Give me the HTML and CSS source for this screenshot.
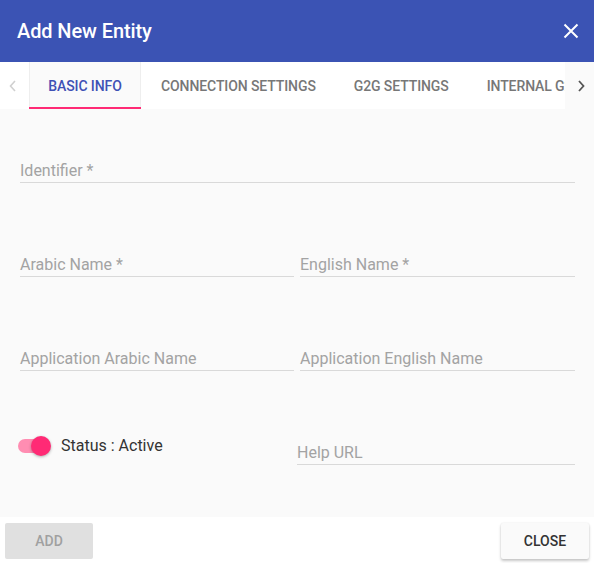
FILE: index.html
```html
<!DOCTYPE html>
<html>
<head>
<meta charset="utf-8">
<link rel="stylesheet" href="styles.css">
</head>
<body>
<div class="dialog">
  <header class="dlg-header">
    <h1 class="dlg-title">Add New Entity</h1>
    <button class="icon-btn" aria-label="close">
      <svg width="16" height="16" viewBox="0 0 16 16"><path d="M1.5 1.5 L14.5 14.5 M14.5 1.5 L1.5 14.5" stroke="#fff" stroke-width="2" fill="none"/></svg>
    </button>
  </header>
  <nav class="tabs">
    <div class="tab-arrow left">
      <svg width="10" height="14" viewBox="0 0 10 14"><path d="M7 2 L2.5 7 L7 12" stroke="#d0d0d0" stroke-width="1.6" fill="none"/></svg>
    </div>
    <div class="tab-list">
      <div class="tab active">BASIC INFO</div>
      <div class="tab">CONNECTION SETTINGS</div>
      <div class="tab">G2G SETTINGS</div>
      <div class="tab">INTERNAL G2G SETTINGS</div>
    </div>
    <div class="tab-arrow right">
      <svg width="10" height="14" viewBox="0 0 10 14"><path d="M3 2 L7.5 7 L3 12" stroke="#555" stroke-width="1.8" fill="none"/></svg>
    </div>
  </nav>
  <main class="dlg-body">
    <div class="field full"><span class="label">Identifier *</span></div>
    <div class="field"><span class="label">Arabic Name *</span></div>
    <div class="field"><span class="label">English Name *</span></div>
    <div class="field"><span class="label">Application Arabic Name</span></div>
    <div class="field"><span class="label">Application English Name</span></div>
    <div class="toggle-row">
      <span class="toggle"><span class="track"></span><span class="knob"></span></span>
      <span class="toggle-text">Status : Active</span>
    </div>
    <div class="field help"><span class="label">Help URL</span></div>
  </main>
  <footer class="dlg-footer">
    <button class="btn btn-disabled">ADD</button>
    <button class="btn btn-raised">CLOSE</button>
  </footer>
</div>
</body>
</html>
```

FILE: styles.css
```css
* { box-sizing: border-box; }
html, body { margin: 0; padding: 0; }
body {
  font-family: Roboto, "Noto Sans", sans-serif;
  background: #fafafa;
  width: 594px;
  height: 563px;
  overflow: hidden;
}
.dialog {
  display: flex;
  flex-direction: column;
  height: 563px;
}
.dlg-header {
  height: 62px;
  background: #3b53b4;
  display: flex;
  align-items: center;
  justify-content: space-between;
  padding: 0 15px 0 17px;
}
.dlg-title {
  margin: 0;
  color: #fff;
  font-size: 20px;
  font-weight: 500;
  letter-spacing: -0.1px;
}
.icon-btn {
  background: none;
  border: 0;
  padding: 0;
  width: 16px;
  height: 16px;
  display: flex;
}
.tabs {
  height: 48px;
  display: flex;
  background: #fafafa;
}
.tab-arrow {
  width: 29px;
  height: 47px;
  display: flex;
  align-items: center;
  justify-content: center;
  flex: none;
}
.tab-arrow.left { background: #fff; justify-content: flex-start; padding-left: 8px; }
.tab-arrow.right { background: #fafafa; padding-left: 2px; }
.tab-list {
  flex: 1;
  display: flex;
  overflow: hidden;
  background: #fff;
  height: 47px;
}
.tab {
  flex: none;
  display: flex;
  align-items: center;
  padding: 0 18px 0 20px;
  font-size: 14px;
  font-weight: 500;
  color: #777;
  white-space: nowrap;
  letter-spacing: -0.1px;
}
.tab.active {
  position: relative;
  width: 112px;
  padding: 0;
  justify-content: center;
  color: #3f51b5;
  background: #fafafa;
  border-left: 1px solid #eee;
  border-right: 1px solid #eee;
}
.tab.active::after {
  content: "";
  position: absolute;
  left: -1px;
  right: -1px;
  bottom: 0;
  height: 2px;
  background: #ff2a75;
}
.dlg-body {
  flex: 1;
  display: grid;
  grid-template-columns: 274px 275px;
  column-gap: 6px;
  row-gap: 63px;
  align-content: start;
  padding: 42px 19px 0 20px;
  background: #fafafa;
}
.field {
  height: 31px;
  border-bottom: 1px solid #d9d9d9;
  display: flex;
  align-items: flex-start;
  padding-top: 9px;
}
.field.full { grid-column: 1 / 3; }
.field.help { margin-left: -3px; }
.label {
  font-size: 16px;
  color: #a3a3a3;
  line-height: 20px;
}
.toggle-row {
  display: flex;
  align-items: flex-start;
  padding-top: 2px;
}
.toggle {
  position: relative;
  width: 34px;
  height: 20px;
  margin-left: -2px;
  flex: none;
}
.track {
  position: absolute;
  left: 0;
  top: 3px;
  width: 30px;
  height: 14px;
  border-radius: 7px;
  background: #ff8db2;
}
.knob {
  position: absolute;
  left: 13px;
  top: 0;
  width: 20px;
  height: 20px;
  border-radius: 50%;
  background: #ff2a75;
  box-shadow: 0 1px 3px rgba(0,0,0,0.3);
}
.toggle-text {
  margin-left: 9px;
  font-size: 16px;
  color: #333;
  line-height: 20px;
}
.dlg-footer {
  height: 46px;
  background: #fff;
  display: flex;
  justify-content: space-between;
  align-items: flex-start;
  padding: 6px 5px 0 5px;
}
.btn {
  width: 88px;
  height: 36px;
  border: 0;
  border-radius: 2px;
  font-family: Roboto, sans-serif;
  font-size: 14px;
  font-weight: 500;
}
.btn-disabled {
  background: #e0e0e0;
  color: #a0a0a0;
}
.btn-raised {
  background: #fafafa;
  color: #333;
  box-shadow: 0 2px 3px rgba(0,0,0,0.22), 0 0 2px rgba(0,0,0,0.08);
}
```
